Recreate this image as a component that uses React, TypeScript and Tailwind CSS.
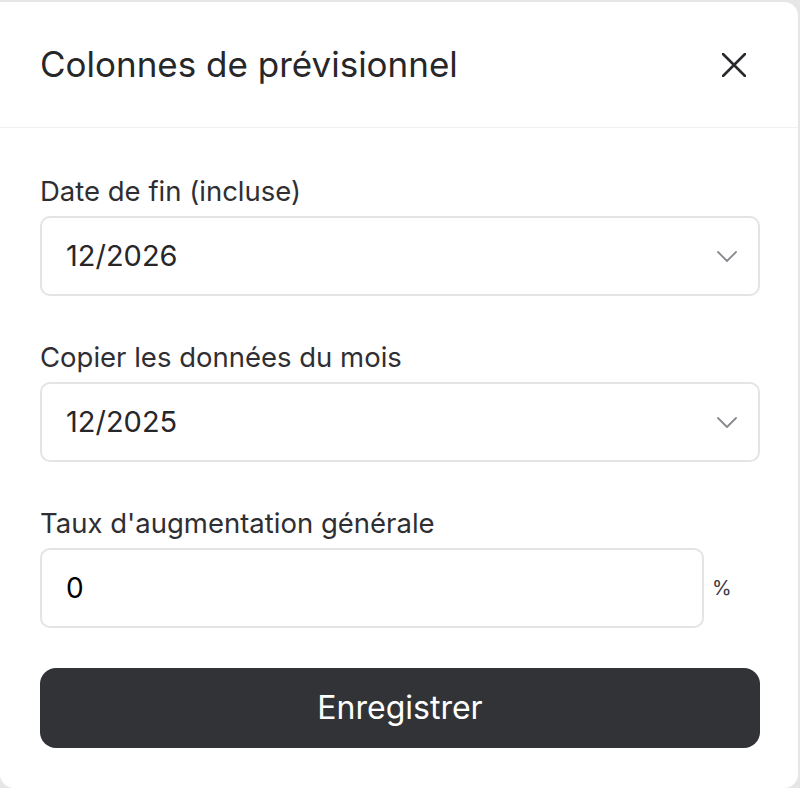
function SelectBox({ value }: { value: string }) {
  return (
    <div className="flex h-[80px] items-center justify-between rounded-[10px] border-2 border-[#e4e4e7] bg-white pl-[24px] pr-[20px]">
      <span className="text-[29px] text-[#27272a]">{value}</span>
      <svg width="22" height="12" viewBox="0 0 22 12" fill="none" className="text-[#8a8a8f]">
        <path d="M2 2l9 9 9-9" stroke="currentColor" strokeWidth="1.8" strokeLinecap="round" strokeLinejoin="round" />
      </svg>
    </div>
  );
}

export default function App() {
  return (
    <div className="h-[788px] w-[800px] bg-[#e6e6e6] pt-[2px] font-['Inter',sans-serif]">
      <div className="flex h-[786px] w-[798px] flex-col rounded-[14px] rounded-tl-none bg-white">
        {/* header */}
        <div className="flex h-[126px] items-center justify-between border-b border-[#f0f0f2] pl-[40px] pr-[52px]">
          <h1 className="text-[35px] font-normal text-[#27272a]">Colonnes de prévisionnel</h1>
          <button className="text-[#2a2a2e]">
            <svg width="24" height="24" viewBox="0 0 24 24" fill="none">
              <path d="M1 1l22 22M23 1L1 23" stroke="currentColor" strokeWidth="2.6" strokeLinecap="round" />
            </svg>
          </button>
        </div>

        <div className="flex flex-col pl-[40px] pr-[38px] pt-[45px]">
          <label className="mb-[7px] block text-[27.5px] leading-[36px] text-[#2f2f33]">Date de fin (incluse)</label>
          <SelectBox value="12/2026" />

          <label className="mb-[7px] mt-[43px] block text-[27.5px] leading-[36px] text-[#2f2f33]">
            Copier les données du mois
          </label>
          <SelectBox value="12/2025" />

          <label className="mb-[7px] mt-[43px] block text-[27.5px] leading-[36px] text-[#2f2f33]">
            Taux d'augmentation générale
          </label>
          <div className="flex items-center">
            <div className="flex h-[80px] flex-1 items-center rounded-[10px] border-2 border-[#e4e4e7] bg-white pl-[24px]">
              <span className="text-[28px] text-black">0</span>
            </div>
            <span className="w-[56px] pl-[8px] text-[20px] text-[#3a3a3e]">%</span>
          </div>

          <button className="mt-[40px] flex h-[80px] items-center justify-center rounded-[16px] bg-[#323337] text-[32px] text-white">
            Enregistrer
          </button>
        </div>
      </div>
    </div>
  );
}
